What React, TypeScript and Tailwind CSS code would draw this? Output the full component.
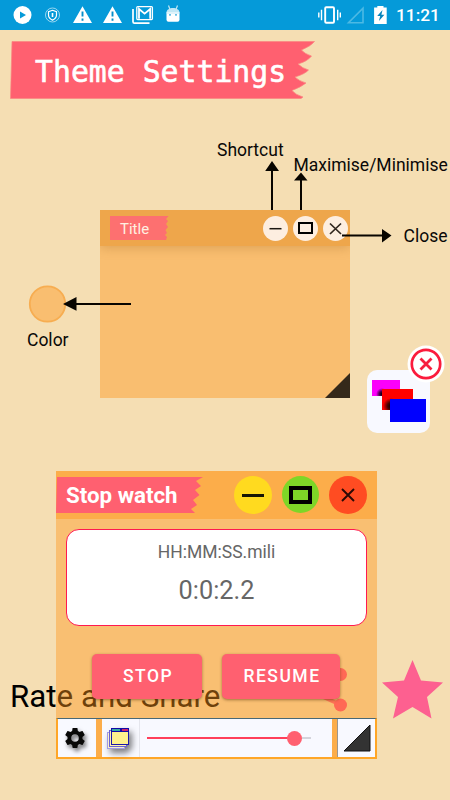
import React from "react";

function StatusBar() {
  return (
    <header className="flex h-[30px] items-center bg-[#059ad9] text-white">
      <svg className="h-[30px] w-[190px]" viewBox="0 0 190 30" fill="none">
        <circle cx="22.5" cy="15" r="9" fill="white" />
        <path d="M20 11.5v7l6-3.5z" fill="#059ad9" />
        <g stroke="#a9dcf2">
          <circle cx="52.5" cy="15" r="7" strokeWidth=".9" />
          <path d="M52.5 10.3l4 1.4v3.2c0 2.2-1.5 4-4 5.2-2.5-1.2-4-3-4-5.2v-3.2z" stroke="white" strokeWidth="1.2" />
          <path d="M52.5 13v4" stroke="white" strokeWidth="1.6" />
        </g>
        <path d="M82.5 6.2L92 23H73zM112.5 6.2L122 23H103z" fill="white" />
        <path d="M82.5 11.5v5M82.5 18.6v2.2M112.5 11.5v5M112.5 18.6v2.2" stroke="#078fca" strokeWidth="1.9" />
        <path d="M133 9v12.7q0 1.500 1.500 1.500H149.500" stroke="white" strokeWidth="1.700" />
        <rect x="136.800" y="6.600" width="15.600" height="13" rx="1" stroke="white" strokeWidth="1.300" />
        <path d="M139 18.800V9l5.600 4.600L150.200 9v9.800" stroke="white" strokeWidth="1.800" />
        <path d="M166.500 13.500h13v6.200q0 2-2 2h-9q-2 0-2-2z" fill="white" />
        <path d="M166.500 12.700c0-6.200 13-6.200 13 0z" fill="#c1e7f5" />
        <path d="M166.500 12h13v2h-13z" fill="#dff3fa" />
        <path d="M168.500 5.500l1.500 4M177.500 5.500l-1.500 4" stroke="#c1e7f5" strokeWidth="1.200" />
        <circle cx="170" cy="14.900" r=".8" fill="#059ad9" />
        <circle cx="176" cy="14.900" r=".8" fill="#059ad9" />
      </svg>
      <svg className="ml-auto h-[30px] w-[80px]" viewBox="310 0 80 30" fill="none">
        <rect x="325.200" y="7.200" width="8.800" height="15.600" rx="1" stroke="white" strokeWidth="1.900" />
        <path d="M321.500 9.800v10.400M337.700 9.800v10.400M318.800 12.500v5M340.300 12.500v5" stroke="white" strokeWidth="1.400" />
        <path d="M348.500 22.800H363V8.300z" stroke="#4cb9e4" strokeWidth="1.600" />
        <path d="M377.300 6h6.200v1.600h3.200V24h-12.600V7.600h3.200z" fill="white" />
        <path d="M382.500 10l-5.300 6h3l-1.300 5 5.500-6.300h-3z" fill="#0784bb" />
      </svg>
      <time className="mr-[11px] ml-[6px] w-[43px] text-[17.300px] leading-[30px] font-medium whitespace-nowrap">11:21</time>
    </header>
  );
}

function Heading() {
  return (
    <h1 className="relative mt-[10px] ml-[10px] h-[60px] w-[306px] font-['DejaVu_Sans_Mono',monospace] text-[29.800px] leading-[64px] text-white [-webkit-text-stroke:0.600px_white]">
      <svg className="absolute inset-0 h-full w-full" viewBox="0 0 306 60">
        <path d="M2 1.500H304.500Q301 6 291.500 10Q295 14 301.500 16Q298 21 288 24Q292 28 298.500 30Q295 34 285 37Q289 41 296 43Q291 47 282 50.500Q286 55 293 57L291 58.500H0.500z" fill="#ff6070" stroke="#fa8580" strokeWidth=".7" />
      </svg>
      <span className="relative ml-[25px] whitespace-nowrap">Theme Settings</span>
    </h1>
  );
}

function Minus() {
  return (
    <svg className="size-[25px]" viewBox="0 0 25 25">
      <path d="M6.500 12.700h12" stroke="#1d1711" strokeWidth="1.500" />
    </svg>
  );
}

function ThemePreview() {
  return (
    <div className="ml-[100px] flex h-[188px] w-[250px] flex-col bg-[#f9be70]">
      <div className="flex h-[36px] items-center bg-[#eea64b] pr-[2px] pl-[10px] shadow-[0_2px_10px_rgba(180,120,50,0.400)] [clip-path:inset(0_0_-14px_0)]">
        <div className="relative h-[24px] w-[59px] text-[15px] leading-[27px] text-[#fff0e1]">
          <svg className="absolute inset-0 h-full w-full" viewBox="0 0 59 24">
            <path d="M0 0h58.500l-2.500 3 2 2-2 3 2 3-2.500 3 1.500 3-2 2 2 2-1 3H0z" fill="#fd7070" />
          </svg>
          <span className="relative ml-[10px]">Title</span>
        </div>
        <div className="ml-auto flex gap-[5px]">
          <span className="size-[25px] rounded-full bg-[#fdeee0]"><Minus /></span>
          <span className="flex size-[25px] items-center justify-center rounded-full bg-[#fdeee0]">
            <span className="h-[12px] w-[15px] border-[2.500px] border-black" />
          </span>
          <span className="size-[25px] rounded-full bg-[#fdeee0]">
            <svg viewBox="0 0 25 25"><path d="M7 7.500l11 10.500M18 7.500L7 18" stroke="#30261e" strokeWidth="1.700" /></svg>
          </span>
        </div>
      </div>
      <svg className="mt-auto ml-auto size-[25px]" viewBox="0 0 25 25"><path d="M0 25L25 0v25z" fill="#35291a" /></svg>
    </div>
  );
}

function ThemeGuide() {
  return (
    <section className="relative h-[260px] pt-[110px] text-[17.500px] leading-[20px] text-[#090807]">
      <ThemePreview />
      <svg className="absolute top-0 left-0 h-[260px] w-[450px]" viewBox="0 100 450 260">
        <circle cx="47.500" cy="304" r="17.700" fill="#f9be70" stroke="#f7ad51" strokeWidth="1.800" />
        <path d="M272 210v-42M301 210v-32M342 235.500h42M131 304H74" stroke="#080500" strokeWidth="2" />
        <path d="M265.200 171l6.800-10 7 10zM294 180.500l7-8 6.500 8zM382 229v13.500l9.500-7zM63 304l13.500-7v13.800z" fill="#080500" />
      </svg>
      <span className="absolute top-[40px] left-[217px]">Shortcut</span>
      <span className="absolute top-[55px] left-[293.500px] whitespace-nowrap">Maximise/Minimise</span>
      <span className="absolute top-[126px] left-[403.500px]">Close</span>
      <span className="absolute top-[230px] left-[27px]">Color</span>
    </section>
  );
}

function RateRow() {
  return (
    <section className="mt-[288px] flex h-[84px] items-center pl-[10px] text-[31.300px] leading-[84px] text-black">
      <span className="relative top-[7px] whitespace-nowrap">Rate and Share</span>
      <svg className="ml-auto h-[50px] w-[50px]" viewBox="300 665 50 50">
        <path d="M341 675L308 690l33 15" fill="none" stroke="#ff5e82" strokeWidth="4" />
        <circle cx="340.500" cy="674.500" r="6.500" fill="#ff4780" />
        <circle cx="340.500" cy="705" r="6.500" fill="#ff4780" />
        <circle cx="308" cy="690" r="6.500" fill="#ff4780" />
      </svg>
      <svg className="mr-[7px] ml-[32px] h-[60px] w-[61px]" viewBox="0 0 61 60">
        <path d="M30.500 0L39 20.500L61 22.500L45 37L49.500 58.500L30.500 47L11 58.500L16 37L0 22.500L22 20.500z" fill="#fd6090" />
      </svg>
    </section>
  );
}

function Shortcut() {
  return (
    <div className="absolute top-[370px] left-[367px] size-[63px] rounded-[10px] bg-[#f8f9ff]">
      <svg className="absolute top-0 left-0 size-[63px]" viewBox="0 0 63 63">
        <defs>
          <radialGradient id="corner"><stop offset="0" stopColor="#000" /><stop offset=".45" stopColor="#000" stopOpacity=".7" /><stop offset="1" stopColor="#000" stopOpacity="0" /></radialGradient>
          <clipPath id="pink"><rect x="5" y="10" width="28" height="16" /></clipPath>
          <clipPath id="red"><rect x="15" y="19" width="31" height="21" /></clipPath>
        </defs>
        <rect x="5" y="10" width="28" height="16" fill="#fb00fb" />
        <circle cx="15" cy="24" r="6" fill="url(#corner)" clipPath="url(#pink)" />
        <rect x="15" y="19" width="31" height="21" fill="#ff0000" />
        <circle cx="24" cy="36" r="8" fill="url(#corner)" clipPath="url(#red)" />
        <rect x="23" y="29" width="36" height="23" fill="#0000ff" />
      </svg>
      <svg className="absolute -top-[25px] left-[40px] size-[38px]" viewBox="0 0 38 38">
        <circle cx="19" cy="19" r="18.500" fill="#fff" />
        <circle cx="19" cy="19" r="14.200" fill="none" stroke="#fb1b3c" strokeWidth="2.700" />
        <path d="M13.500 13.500l11 11M24.500 13.500l-11 11" stroke="#f71e3d" strokeWidth="2.800" />
      </svg>
    </div>
  );
}

function WindowsIcon() {
  return (
    <svg className="mt-[4px] ml-px size-[32px] drop-shadow-[3px_4px_3px_rgba(0,0,0,0.500)]" viewBox="0 0 32 32">
      <rect x="4.500" y="8.500" width="17" height="16" fill="#f8f1c7" stroke="#a19ae7" />
      <rect x="6.500" y="6.500" width="17" height="16" fill="#fff3b0" stroke="#6860d4" />
      <rect x="8.500" y="4.500" width="17" height="16" fill="#fff18e" stroke="#1e18aa" />
      <path d="M8 6h18" stroke="#120aa7" strokeWidth="4" />
      <path d="M9 6h8" stroke="#3fbe9d" strokeWidth="1.800" />
      <path d="M19 6h6" stroke="#e22b65" strokeWidth="1.800" />
    </svg>
  );
}

function Stopwatch() {
  return (
    <section className="absolute top-[471px] left-[56px] flex h-[288px] w-[321px] flex-col bg-[rgba(255,150,28,0.430)]">
      <div className="flex h-[48px] items-center bg-[#fcad4a] pr-[10px]">
        <h2 className="relative h-[38px] w-[148px] text-[22.300px] leading-[39px] font-bold text-white">
          <svg className="absolute inset-0 h-full w-full" viewBox="0 0 148 38">
            <path d="M1 1H147l-7 4 5 5-6 4 4.500 5-6.500 5 4 5-6 4 4 4H0z" fill="#ff6070" />
          </svg>
          <span className="relative ml-[10px] whitespace-nowrap">Stop watch</span>
        </h2>
        <div className="ml-auto flex gap-[10px]">
          <span className="flex size-[38px] items-center justify-center rounded-full bg-[#ffda1f]"><span className="h-[3px] w-[22px] bg-[#171504]" /></span>
          <span className="flex size-[37px] items-center justify-center rounded-full bg-[#7ed627]"><span className="h-[18px] w-[23px] border-4 border-black" /></span>
          <span className="flex size-[38px] items-center justify-center rounded-full bg-[#ff4c22]">
            <svg className="size-[38px]" viewBox="0 0 38 38"><path d="M13 13l12 12M25 13L13 25" stroke="#2b0905" strokeWidth="1.900" /></svg>
          </span>
        </div>
      </div>
      <div className="mx-[10px] mt-[10px] flex h-[97px] flex-col items-center rounded-[13px] border border-[#ff194f] bg-white text-[#666]">
        <span className="mt-[10px] text-[17.500px] leading-[24px]">HH:MM:SS.mili</span>
        <span className="mt-[11px] text-[25.300px] leading-[32px]">0:0:2.2</span>
      </div>
      <div className="mt-[28px] ml-[36px] flex gap-[20px] text-[17.500px] font-medium tracking-[1.500px] text-white">
        <button className="h-[45px] w-[110px] rounded-[5px] bg-[#ff6070] pl-[2px] shadow-[0_1px_3px_rgba(70,40,0,0.500)]">STOP</button>
        <button className="h-[45px] w-[118px] rounded-[5px] bg-[#ff6070] pl-[2px] shadow-[0_1px_3px_rgba(70,40,0,0.500)]">RESUME</button>
      </div>
      <footer className="mt-auto flex h-[41px] border-t border-r-2 border-b-2 border-l-2 border-[#ffa627] border-t-[#486875] bg-[#fcad4a]">
        <div className="flex w-[38px] items-center justify-center bg-[#f8f9ff] pr-[5px]">
          <svg className="size-[24px] drop-shadow-[2px_3px_2px_rgba(0,0,0,0.550)]" viewBox="0 0 24 24">
            <path fill="#080808" d="M19.430 12.980c.04-.32.07-.64.07-.98s-.03-.66-.07-.98l2.110-1.650c.19-.15.24-.42.120-.64l-2-3.460c-.12-.22-.39-.3-.61-.22l-2.490 1c-.52-.4-1.080-.73-1.690-.98l-.38-2.650C14.460 2.180 14.250 2 14 2h-4c-.25 0-.46.18-.49.42l-.38 2.650c-.61.25-1.170.59-1.690.98l-2.490-1c-.23-.09-.49 0-.61.22l-2 3.460c-.13.22-.07.49.12.64l2.110 1.650c-.04.32-.07.65-.07.98s.03.66.07.98l-2.110 1.650c-.19.15-.24.42-.12.64l2 3.460c.12.22.39.3.61.22l2.490-1c.52.4 1.080.73 1.690.98l.38 2.650c.03.24.24.42.49.42h4c.25 0 .46-.18.49-.42l.38-2.650c.61-.25 1.170-.59 1.690-.98l2.490 1c.23.09.49 0 .61-.22l2-3.460c.12-.22.07-.49-.12-.64zM12 15.800a3.800 3.800 0 1 1 0-7.600 3.800 3.800 0 0 1 0 7.600z" />
          </svg>
        </div>
        <div className="ml-[6px] flex w-[38px] items-center justify-start border-r border-[#e5e6ed] bg-[#f8f9ff]"><WindowsIcon /></div>
        <div className="flex flex-1 items-center bg-[#f8f9ff] pl-[7px]">
          <span className="h-[2px] w-[147px] bg-[#ff3f5a]" />
          <span className="-ml-[7px] size-[15px] rounded-full bg-[#ff6070]" />
          <span className="h-[2px] w-[9px] bg-[#d4d4dc]" />
        </div>
        <div className="ml-[5px] w-[38px] border-l border-[#9b9690] bg-[#f8f9ff]">
          <svg className="mt-[5px] ml-[5px] size-[28px]" viewBox="0 0 28 28"><path d="M1 27L27 1v26z" fill="#333" stroke="#111" /></svg>
        </div>
      </footer>
    </section>
  );
}

export default function App() {
  return (
    <main className="relative h-[800px] w-[450px] overflow-hidden bg-[#f5deb3] font-[Roboto,sans-serif]">
      <StatusBar />
      <Heading />
      <ThemeGuide />
      <RateRow />
      <Shortcut />
      <Stopwatch />
    </main>
  );
}
